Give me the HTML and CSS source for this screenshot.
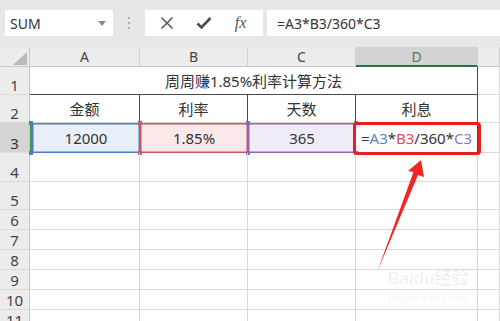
FILE: index.html
```html
<!DOCTYPE html>
<html lang="zh-CN">
<head>
<meta charset="UTF-8">
<title>周周赚利率计算</title>
<link rel="stylesheet" href="styles.css">
</head>
<body>

<div class="window">
  <!-- formula bar -->
  <div class="toolbar">
    <div class="namebox">
      <span>SUM</span>
      <svg class="caret" width="8" height="5" viewBox="0 0 8 5"><path d="M0 0h8L4 5z" fill="#8a8a8a"/></svg>
    </div>
    <div class="grip">
      <svg width="4" height="14" viewBox="0 0 4 14"><circle cx="2" cy="2" r="1.1" fill="#a0a0a0"/><circle cx="2" cy="7" r="1.1" fill="#a0a0a0"/><circle cx="2" cy="12" r="1.1" fill="#a0a0a0"/></svg>
    </div>
    <div class="fxbox">
      <span class="fxbtn">
        <svg width="14" height="14" viewBox="0 0 14 14"><path d="M1.5 1.5l11 11M12.5 1.5l-11 11" stroke="#5a5a5a" stroke-width="1.6"/></svg>
      </span>
      <span class="fxbtn">
        <svg width="16" height="14" viewBox="0 0 16 14"><path d="M1.5 7.5l4 4L14.5 2" fill="none" stroke="#4a4a4a" stroke-width="2.6"/></svg>
      </span>
      <span class="fxbtn fx">fx</span>
    </div>
    <div class="formula">=A3*B3/360*C3</div>
  </div>

  <!-- sheet -->
  <div class="sheet">
    <div class="corner">
      <svg width="30" height="20" viewBox="0 0 30 20"><path d="M13 18L27 5v13z" fill="#b9b9b9"/></svg>
    </div>
    <div class="colhead">A</div>
    <div class="colhead">B</div>
    <div class="colhead">C</div>
    <div class="colhead active">D</div>
    <div class="colhead"></div>

    <div class="rowhead">1</div>
    <div class="cell title">周周赚1.85%利率计算方法</div>
    <div class="cell"></div>

    <div class="rowhead">2</div>
    <div class="cell label">金额</div>
    <div class="cell label">利率</div>
    <div class="cell label">天数</div>
    <div class="cell label">利息</div>
    <div class="cell"></div>

    <div class="rowhead current">3</div>
    <div class="cell ref ref-a">12000
      <span class="handle tl"></span><span class="handle bl"></span>
    </div>
    <div class="cell ref ref-b">1.85%
      <span class="handle tl"></span><span class="handle tr"></span>
      <span class="handle bl"></span><span class="handle br"></span>
    </div>
    <div class="cell ref ref-c">365
      <span class="handle tl"></span><span class="handle tr"></span>
      <span class="handle bl"></span><span class="handle br"></span>
    </div>
    <div class="cell editing">=<span class="c-a">A3</span>*<span class="c-b">B3</span>/360*<span class="c-c">C3</span></div>
    <div class="cell"></div>

    <div class="rowhead">4</div>
    <div class="cell"></div><div class="cell"></div><div class="cell"></div><div class="cell"></div><div class="cell"></div>
    <div class="rowhead">5</div>
    <div class="cell"></div><div class="cell"></div><div class="cell"></div><div class="cell"></div><div class="cell"></div>
    <div class="rowhead">6</div>
    <div class="cell"></div><div class="cell"></div><div class="cell"></div><div class="cell"></div><div class="cell"></div>
    <div class="rowhead">7</div>
    <div class="cell"></div><div class="cell"></div><div class="cell"></div><div class="cell"></div><div class="cell"></div>
    <div class="rowhead">8</div>
    <div class="cell"></div><div class="cell"></div><div class="cell"></div><div class="cell"></div><div class="cell"></div>
    <div class="rowhead">9</div>
    <div class="cell"></div><div class="cell"></div><div class="cell"></div><div class="cell"></div><div class="cell"></div>
    <div class="rowhead">10</div>
    <div class="cell"></div><div class="cell"></div><div class="cell"></div><div class="cell"></div><div class="cell"></div>
    <div class="rowhead">11</div>
    <div class="cell"></div><div class="cell"></div><div class="cell"></div><div class="cell"></div><div class="cell"></div>
  </div>

  <!-- annotation over the sheet -->
  <div class="mark-box"></div>
  <svg class="mark-arrow" width="500" height="321" viewBox="0 0 500 321">
    <path d="M421 160L408 171L413.5 172L377.5 271L418 175L424 177z" fill="#f0261f"/>
  </svg>
  <div class="watermark">
    <div class="wm-logo">Baidu经验</div>
    <div class="wm-url">jingyan.baidu.com</div>
  </div>
</div>

</body>
</html>
```

FILE: styles.css
```css
body {
  margin: 0;
  font-family: "Noto Sans", "Noto Sans CJK SC", sans-serif;
  background-color: #fff;
  color: #333;
}
.window {
  position: relative;
  width: 500px;
  height: 321px;
  overflow: hidden;
}

/* formula bar */
.toolbar {
  height: 47px;
  box-sizing: border-box;
  padding: 10px 0 0 5px;
  background-color: #e7e7e7;
  display: flex;
  align-items: flex-start;
}
.namebox {
  width: 108px;
  height: 26px;
  box-sizing: border-box;
  padding: 0 7px 0 5px;
  background-color: #fff;
  display: flex;
  align-items: center;
  justify-content: space-between;
  font-size: 14px;
  color: #333;
}
.grip {
  width: 32px;
  height: 26px;
  display: flex;
  align-items: center;
  justify-content: center;
}
.fxbox {
  width: 118px;
  height: 26px;
  box-sizing: border-box;
  padding-left: 3px;
  background-color: #fff;
  display: flex;
  align-items: center;
}
.fxbtn {
  width: 37px;
  display: flex;
  justify-content: center;
  align-items: center;
}
.fx {
  font-family: "Liberation Serif", serif;
  font-style: italic;
  font-size: 16px;
  color: #555;
}
.formula {
  flex: 1;
  height: 26px;
  margin-left: 4px;
  padding-left: 10px;
  background-color: #fff;
  display: flex;
  align-items: center;
  font-size: 14px;
  color: #333;
}

/* grid */
.sheet {
  display: grid;
  grid-template-columns: 30px 110px 108px 108px 122px 1fr;
  grid-template-rows: 20px 28px 28px 30px 29px 28px repeat(6, 20px);
}
.corner {
  background-color: #ececec;
  border-right: 1px solid #c9c9c9;
  border-bottom: 1px solid #c9c9c9;
}
.colhead {
  background-color: #ececec;
  border-right: 1px solid #d0d0d0;
  border-bottom: 1px solid #c9c9c9;
  display: flex;
  align-items: center;
  justify-content: center;
  font-size: 14px;
  color: #444;
}
.colhead.active {
  background-color: #d3d3d3;
  border-bottom: 2px solid #217346;
  color: #4a7a5c;
}
.rowhead {
  background-color: #ececec;
  border-right: 1px solid #c4c4c4;
  border-bottom: 1px solid #dcdcdc;
  display: flex;
  align-items: flex-end;
  justify-content: center;
  font-size: 15px;
  line-height: 18px;
  color: #444;
}
.rowhead.current {
  background-color: #d4d4d4;
  color: #333;
}
.cell {
  position: relative;
  border-right: 1px solid #d8d8d8;
  border-bottom: 1px solid #d8d8d8;
  display: flex;
  align-items: center;
  justify-content: center;
  font-size: 15px;
  color: #333;
}
.title {
  grid-column: span 4;
  border-right-color: #4a4a4a;
  border-bottom-color: #4a4a4a;
}
.label {
  border-right-color: #4a4a4a;
}

/* referenced cells */
.ref {
  border: none;
}
.ref-a {
  background-color: #e9eff9;
  box-shadow: inset 0 0 0 1.5px #4f7bc4;
  border-left: 2px solid #3f9a4a;
}
.ref-b {
  background-color: #fbe8e9;
  box-shadow: inset 0 0 0 1.5px #cf5462;
}
.ref-c {
  background-color: #f0ecf7;
  box-shadow: inset 0 0 0 1.5px #8a68c0;
}
.handle {
  position: absolute;
  width: 4px;
  height: 4px;
}
.ref-a .handle { background-color: #4f7bc4; }
.ref-b .handle { background-color: #cf5462; }
.ref-c .handle { background-color: #8a68c0; }
.handle.tl { left: -2px; top: -2px; }
.handle.tr { right: -2px; top: -2px; }
.handle.bl { left: -2px; bottom: -2px; }
.handle.br { right: -2px; bottom: -2px; }
.ref-a .handle.tl, .ref-a .handle.bl { left: -3px; }

.editing {
  border-right-color: #4a4a4a;
  color: #333;
}
.c-a { color: #5a84c8; }
.c-b { color: #d2505c; }
.c-c { color: #9479c4; }

/* annotation */
.mark-box {
  position: absolute;
  left: 353px;
  top: 122px;
  width: 128px;
  height: 33px;
  box-sizing: border-box;
  border: 3px solid #ee1d1d;
  border-radius: 4px;
}
.mark-arrow {
  position: absolute;
  left: 0;
  top: 0;
}
.watermark {
  position: absolute;
  left: 385px;
  top: 266px;
  width: 86px;
  color: rgba(0, 0, 0, 0.06);
  font-family: "Liberation Sans", "Noto Sans CJK SC", sans-serif;
  text-align: center;
}
.wm-logo {
  font-size: 17px;
  font-weight: bold;
  line-height: 26px;
}
.wm-url {
  font-size: 9px;
  font-weight: bold;
  line-height: 12px;
}
```
